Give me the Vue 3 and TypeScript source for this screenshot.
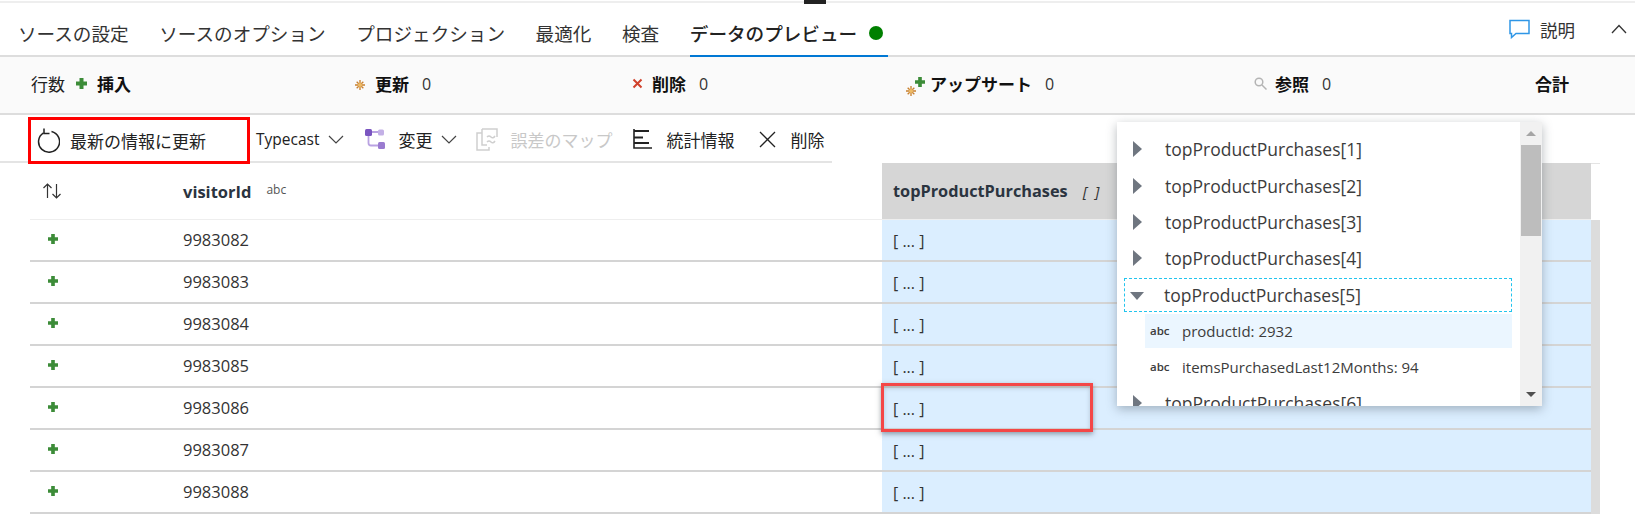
<template>
  <div class="page">
    <div class="top-line"><span class="notch" /></div>

    <nav class="tabs">
      <span v-for="t in tabs" :key="t" class="tab">{{ t }}</span>
      <span class="tab active">データのプレビュー<i class="dot" /></span>
      <span class="tabs-right">
        <svg class="comment" width="21" height="20" viewBox="0 0 21 20" fill="none">
          <path d="M1 1.5h19v13H7l-4.500 4v-4H1z" stroke="#2f96e6" stroke-width="1.500" />
        </svg>
        <span class="help">説明</span>
        <svg width="16" height="10" viewBox="0 0 16 10" fill="none">
          <path d="M1 9l7-7.500 7 7.500" stroke="#333" stroke-width="1.300" />
        </svg>
      </span>
    </nav>

    <section class="summary">
      <div class="stat">
        <span class="rows-label">行数</span>
        <svg class="plus" width="11" height="11" viewBox="0 0 11 11"><path d="M3.500 0h4v3.500H11v4H7.500V11h-4V7.500H0v-4h3.500z" fill="#3c8c38" /></svg>
        <b>挿入</b>
      </div>
      <div class="stat">
        <svg class="star" width="10" height="10" viewBox="0 0 12 12" stroke="#c8802e" stroke-width="1.600"><path d="M6 0v12M0 6h12M2 2l8 8M10 2l-8 8" /><circle cx="6" cy="6" r="2.500" fill="#eebb66" stroke="none" /></svg>
        <b>更新</b><span class="num">0</span>
      </div>
      <div class="stat">
        <svg class="cross" width="11" height="11" viewBox="0 0 11 11"><path d="M1.500 1.500l8 8M9.500 1.500l-8 8" stroke="#d0402a" stroke-width="2" /></svg>
        <b>削除</b><span class="num">0</span>
      </div>
      <div class="stat">
        <span class="upsert">
          <svg class="up-star" width="10" height="10" viewBox="0 0 12 12" stroke="#c8802e" stroke-width="1.600"><path d="M6 0v12M0 6h12M2 2l8 8M10 2l-8 8" /><circle cx="6" cy="6" r="2.500" fill="#eebb66" stroke="none" /></svg>
          <svg class="up-plus" width="10" height="10" viewBox="0 0 11 11"><path d="M3.500 0h4v3.500H11v4H7.500V11h-4V7.500H0v-4h3.500z" fill="#3c8c38" /></svg>
        </span>
        <b>アップサート</b><span class="num">0</span>
      </div>
      <div class="stat">
        <svg class="lens" width="13" height="13" viewBox="0 0 13 13" fill="none" stroke="#b4b4b4" stroke-width="1.500"><circle cx="5" cy="5" r="3.800" /><path d="M8 8l4.500 4.500" /></svg>
        <b>参照</b><span class="num">0</span>
      </div>
      <div class="stat"><b>合計</b></div>
    </section>

    <section class="toolbar">
      <button class="refresh">
        <svg width="24" height="26" viewBox="0 0 24 26" fill="none" stroke="#222" stroke-width="1.500">
          <path d="M7.500 4.800a10.500 10.500 0 1 0 8-1.300" />
          <path d="M8 .5v5h5.500" />
        </svg>
        <span>最新の情報に更新</span>
      </button>
      <span class="tool typecast">Typecast
        <svg class="chev" width="16" height="9" viewBox="0 0 16 9" fill="none"><path d="M1 1l7 7 7-7" stroke="#444" stroke-width="1.200" /></svg>
      </span>
      <span class="tool modify">
        <svg width="20" height="20" viewBox="0 0 20 20" fill="none">
          <path d="M6 3h8M3.500 7v7q0 2.500 2.500 2.500h8" stroke="#b9a2e2" stroke-width="1.800" />
          <rect x="0" y="0" width="7" height="7" rx="1.500" fill="#7a55c0" />
          <rect x="13" y="0.500" width="6" height="6" rx="1.500" fill="#c3b0e6" />
          <rect x="13" y="13" width="7" height="7" rx="1.500" fill="#9a7bd0" />
        </svg>
        <span class="modify-label">変更</span>
        <svg class="chev" width="16" height="9" viewBox="0 0 16 9" fill="none"><path d="M1 1l7 7 7-7" stroke="#444" stroke-width="1.200" /></svg>
      </span>
      <span class="tool disabled">
        <svg width="22" height="23" viewBox="0 0 22 23" fill="none" stroke="#cfcfcf" stroke-width="1.500">
          <path d="M6 1h15v8M6 1v16h5" />
          <path d="M6 5H1v17h12v-3" />
          <path d="M11 9q2-2 4 0t4-1M11 14q2-2 4 0t4-1" />
        </svg>
        <span>誤差のマップ</span>
      </span>
      <span class="tool stats">
        <svg width="19" height="20" viewBox="0 0 19 20" fill="none" stroke="#222">
          <path d="M1 0v19h18" stroke-width="1.600" />
          <path d="M1 2h15M1 8.500h9M1 14h15" stroke-width="1.800" />
        </svg>
        <span>統計情報</span>
      </span>
      <span class="tool remove">
        <svg width="17" height="17" viewBox="0 0 17 17" fill="none"><path d="M1 1l15 15M16 1L1 16" stroke="#222" stroke-width="1.300" /></svg>
        <span>削除</span>
      </span>
    </section>

    <section class="grid-wrap">
      <div class="grid">
        <div class="row head">
          <div class="marker">
            <svg width="20" height="16" viewBox="0 0 20 16" fill="none" stroke="#333" stroke-width="1.200"><path d="M5.500 15V1M1.500 5l4-4 4 4M14.500 1v14M10.500 11l4 4 4-4" /></svg>
          </div>
          <div class="id-col"><b class="col-name">visitorId</b><span class="abc">abc</span></div>
          <div class="array-col"><b class="col-name wide">topProductPurchases</b><i class="brackets">[ ]</i></div>
        </div>
        <div v-for="id in ids" :key="id" class="row">
          <div class="marker">
            <svg width="10" height="10" viewBox="0 0 11 11"><path d="M3.500 0h4v3.500H11v4H7.500V11h-4V7.500H0v-4h3.500z" fill="#3c8c38" /></svg>
          </div>
          <div class="id-col">{{ id }}</div>
          <div class="array-col">[ ... ]<span v-if="id === 9983086" class="callout" /></div>
        </div>
      </div>
      <div class="grid-scroll" />
    </section>

    <aside class="popup">
      <div class="tree">
        <div v-for="n in 4" :key="n" class="node">
          <span class="tri-right" />topProductPurchases[{{ n }}]
        </div>
        <div class="node focused"><span class="tri-down" />topProductPurchases[5]</div>
        <div class="leaf selected"><span class="leaf-abc">abc</span>productId: 2932</div>
        <div class="leaf"><span class="leaf-abc">abc</span>itemsPurchasedLast12Months: 94</div>
        <div class="node"><span class="tri-right" />topProductPurchases[6]</div>
      </div>
      <div class="pop-scroll">
        <span class="arrow-up" />
        <span class="thumb" />
        <span class="arrow-down" />
      </div>
    </aside>
  </div>
</template>

<script setup lang="ts">
const tabs: string[] = ['ソースの設定', 'ソースのオプション', 'プロジェクション', '最適化', '検査']
const ids: number[] = [9983082, 9983083, 9983084, 9983085, 9983086, 9983087, 9983088]
</script>

<style>
html,
body {
  margin: 0;
  background: #fff;
  overflow: hidden;
}
</style>

<style scoped>
.page {
  position: relative;
  width: 1635px;
  height: 525px;
  overflow: hidden;
  background: #fff;
  color: #333;
  font-family: "Open Sans", "Noto Sans CJK JP", sans-serif;
}
.top-line {
  position: relative;
  height: 2px;
  margin-top: 1px;
  background: #eee;
}
.notch {
  position: absolute;
  left: 804px;
  top: -1px;
  width: 22px;
  height: 4px;
  background: #222;
}
.tabs {
  display: flex;
  align-items: center;
  gap: 30.600px;
  height: 52px;
  padding-left: 18px;
  font-size: 18.600px;
  border-bottom: 2px solid #ddd;
  box-sizing: content-box;
}
.tab {
  display: flex;
  align-items: center;
  height: 100%;
  padding-top: 7px;
  box-sizing: border-box;
  white-space: nowrap;
}
.tab.active {
  position: relative;
  gap: 12px;
  width: 198px;
  color: #222;
  font-weight: 500;
  box-shadow: 0 2px 0 #0078d4;
}
.dot {
  width: 14px;
  height: 14px;
  border-radius: 50%;
  background: #008000;
}
.tabs-right {
  display: flex;
  align-items: center;
  margin-left: auto;
  padding-right: 8px;
}
.help {
  margin: 0 36px 0 10px;
  font-size: 17.500px;
}
.summary {
  display: grid;
  grid-template-columns: 323px 278px 273px 349px 281px auto;
  align-items: center;
  height: 58px;
  padding: 0 0 3px 31px;
  background: #fafafa;
  border-bottom: 2px solid #ddd;
  box-sizing: border-box;
  font-size: 17px;
  color: #111;
}
.stat {
  display: flex;
  align-items: center;
  white-space: nowrap;
}
.stat b {
  font-weight: 700;
}
.rows-label {
  margin-right: 11px;
  color: #222;
}
.plus {
  margin-right: 10px;
}
.star {
  margin: 2px 10px 0 1px;
}
.cross {
  margin-right: 9px;
}
.lens {
  margin-right: 8px;
}
.num {
  margin-left: 13px;
  font-size: 16px;
  color: #333;
}
.upsert {
  position: relative;
  width: 25px;
  height: 20px;
  margin-top: 5px;
}
.up-star {
  position: absolute;
  left: 1px;
  bottom: 0;
}
.up-plus {
  position: absolute;
  right: 5px;
  top: 1px;
}
.toolbar {
  display: flex;
  align-items: center;
  height: 48px;
  width: 832px;
  padding-top: 2px;
  font-size: 17px;
  color: #222;
  border-bottom: 2px solid #e4e4e4;
  box-sizing: border-box;
}
.refresh {
  display: flex;
  align-items: center;
  align-self: flex-start;
  gap: 10px;
  flex: none;
  width: 222px;
  height: 47px;
  margin: 0 6px 0 28px;
  padding: 0 0 0 5px;
  border: 3px solid #f00;
  background: #fff;
  font: inherit;
  color: #222;
  box-sizing: border-box;
}
.tool {
  display: flex;
  align-items: center;
  white-space: nowrap;
}
.typecast {
  font-size: 15.500px;
}
.chev {
  margin-left: 9px;
}
.modify {
  margin-left: 21px;
}
.modify-label {
  margin-left: 13px;
}
.disabled {
  margin-left: 19px;
  gap: 12px;
  color: #c8c8c8;
}
.stats {
  margin-left: 21px;
  gap: 14px;
}
.remove {
  margin-left: 25px;
  gap: 14px;
}
.grid-wrap {
  display: flex;
  margin-left: 30px;
}
.grid {
  width: 1561px;
}
.row {
  display: grid;
  grid-template-columns: 153px 699px 709px;
  height: 42px;
  box-sizing: border-box;
  border-bottom: 2px solid #d4d4d4;
  font-size: 16.500px;
  color: #333;
}
.row > div {
  display: flex;
  align-items: center;
  box-sizing: border-box;
}
.row > .marker,
.row > .id-col {
  padding-bottom: 2px;
}
.row > .array-col {
  padding-top: 1px;
  font-size: 16px;
}
.row.head {
  height: 57px;
  border-bottom: 1px solid #eee;
}
.row.head > div {
  padding: 0;
}
.row.head .array-col {
  padding-left: 11px;
  background: #d6d6d6;
}
.marker {
  padding-left: 18px;
}
.row.head .marker {
  padding-left: 12px;
}
.array-col {
  position: relative;
  padding-left: 11px;
  background: #dbeeff;
}
.col-name {
  font-size: 16.500px;
  font-weight: 700;
  color: #2b3440;
}
.col-name.wide {
  font-size: 16.300px;
}
.abc {
  margin: -4px 0 0 15px;
  font-size: 12px;
  color: #555;
}
.brackets {
  margin-left: 15px;
  font-size: 15px;
  word-spacing: 4px;
  color: #333;
}
.callout {
  position: absolute;
  z-index: 1;
  left: -1px;
  top: -5px;
  width: 212px;
  height: 49px;
  border: 3px solid #f44747;
  box-sizing: border-box;
  box-shadow: 0 2px 5px rgba(60, 70, 80, 0.5), inset 0 2px 4px rgba(60, 70, 80, 0.25);
}
.grid-scroll {
  width: 9px;
  background: linear-gradient(#e4e4e4 0 1px, transparent 1px 57px, #dcdcdc 57px);
}
.popup {
  position: absolute;
  z-index: 2;
  left: 1117px;
  top: 122px;
  display: flex;
  width: 425px;
  height: 284px;
  overflow: hidden;
  background: #fff;
  box-shadow: 0 3px 10px rgba(50, 60, 70, 0.35);
}
.tree {
  flex: 1;
  padding: 9px 8px 0 7px;
  font-size: 17.500px;
  color: #3c3c3c;
}
.node {
  display: flex;
  align-items: center;
  height: 36.400px;
  padding-left: 9px;
  box-sizing: border-box;
  white-space: nowrap;
}
.tri-right {
  width: 0;
  height: 0;
  margin-right: 23px;
  border-left: 9px solid #6f7680;
  border-top: 8px solid transparent;
  border-bottom: 8px solid transparent;
}
.tri-down {
  width: 0;
  height: 0;
  margin: 2px 20px 0 -3px;
  border-top: 8px solid #6f7680;
  border-left: 7.500px solid transparent;
  border-right: 7.500px solid transparent;
}
.focused {
  border: 1px dashed #22c4ee;
  padding-left: 8px;
  height: 34px;
  margin: 1px 0;
}
.leaf {
  display: flex;
  align-items: center;
  height: 34px;
  margin: 2px 0 1px 21px;
  padding-left: 5px;
  font-size: 15px;
  white-space: nowrap;
}
.leaf.selected {
  background: #ebf6ff;
}
.leaf-abc {
  width: 32px;
  font-size: 11.500px;
  font-weight: 600;
}
.pop-scroll {
  position: relative;
  width: 22px;
  background: #f1f1f1;
}
.thumb {
  position: absolute;
  left: 1px;
  top: 23px;
  width: 20px;
  height: 91px;
  background: #bdbdbd;
}
.arrow-up {
  position: absolute;
  left: 6px;
  top: 9px;
  border-bottom: 5px solid #a5a5a5;
  border-left: 5px solid transparent;
  border-right: 5px solid transparent;
}
.arrow-down {
  position: absolute;
  left: 6px;
  bottom: 9px;
  border-top: 5px solid #505050;
  border-left: 5px solid transparent;
  border-right: 5px solid transparent;
}
</style>
